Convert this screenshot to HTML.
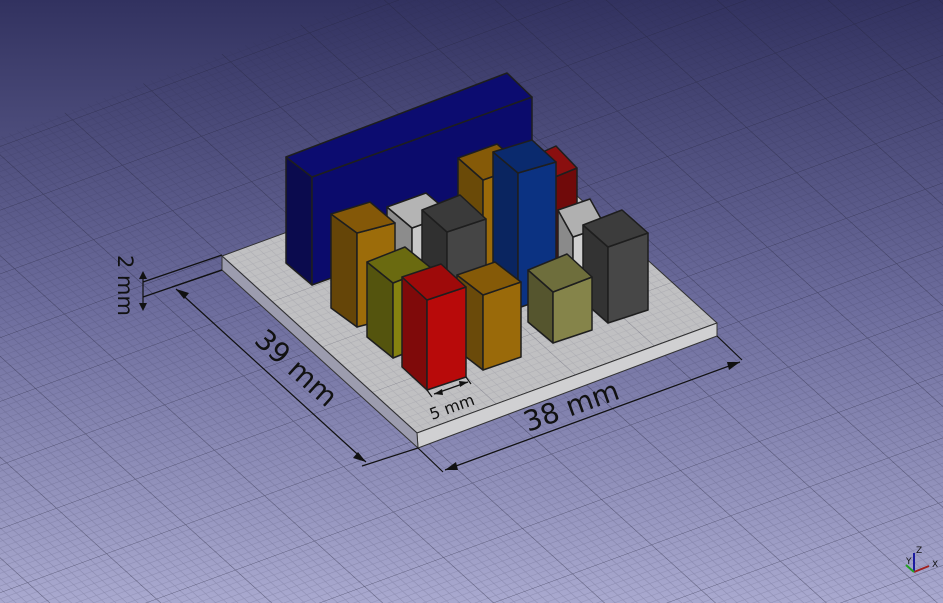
<!DOCTYPE html>
<html><head><meta charset="utf-8"><style>
html,body{margin:0;padding:0;width:943px;height:603px;overflow:hidden}
svg{display:block}
text{font-family:"DejaVu Sans","Liberation Sans",sans-serif;fill:#111}
</style></head><body>
<svg width="943" height="603" viewBox="0 0 943 603" xmlns="http://www.w3.org/2000/svg">
<defs>
<linearGradient id="bg" x1="0" y1="0" x2="0" y2="1">
<stop offset="0" stop-color="#323260"/>
<stop offset="0.5" stop-color="#6c6c9c"/>
<stop offset="1" stop-color="#a9a9cf"/>
</linearGradient>
<pattern id="grid" patternUnits="userSpaceOnUse" width="10" height="10" patternTransform="matrix(7.9 -2.9 5.0 4.54 222 256)">
<g stroke="#2a2a48" stroke-opacity="0.2" stroke-width="0.08" fill="none">
<path d="M1 0V10M2 0V10M3 0V10M4 0V10M5 0V10M6 0V10M7 0V10M8 0V10M9 0V10M0 1H10M0 2H10M0 3H10M0 4H10M0 5H10M0 6H10M0 7H10M0 8H10M0 9H10"/>
</g>
<path d="M0 0V10M0 0H10" stroke="#22223a" stroke-opacity="0.55" stroke-width="0.15" fill="none"/>
</pattern>
<clipPath id="gclip"><polygon points="0,137 367,0 943,0 943,603 0,603"/></clipPath>
</defs>
<rect width="943" height="603" fill="url(#bg)"/>
<rect width="943" height="603" fill="url(#grid)" clip-path="url(#gclip)"/>

<!-- plate -->
<g stroke="#333" stroke-width="1" stroke-linejoin="round">
<polygon points="222,256 522,146 717,323 417,433" fill="#c0c0c2"/>
<polygon points="417,433 717,323 717,336 418,448" fill="#d0d0d2"/>
<polygon points="222,256 417,433 418,448 222,270" fill="#9c9cae"/>
</g>
<polygon points="222,256 522,146 717,323 417,433" fill="url(#grid)" opacity="0.6"/>

<g stroke="#1e1e1e" stroke-width="1.5" stroke-linejoin="round">
<polygon points="286,157 312,177 312,285 286,263" fill="#0b0b4e"/>
<polygon points="312,177 532,97 532,205 312,285" fill="#0b0b6c"/>
<polygon points="286,157 507,73 532,97 312,177" fill="#0c0c70"/>
<polygon points="387,207 412,228 412,288 387,267" fill="#8c8c8c"/>
<polygon points="412,228 451,214 451,274 412,288" fill="#c8c8c8"/>
<polygon points="387,207 426,193 451,214 412,228" fill="#b4b4b4"/>
<polygon points="458,158 483,180 483,290 458,268" fill="#6a4a08"/>
<polygon points="483,180 522,166 522,276 483,290" fill="#9a6a0a"/>
<polygon points="458,158 497,144 522,166 483,180" fill="#855a08"/>
<polygon points="525,160 545,181 545,271 525,250" fill="#5a0808"/>
<polygon points="545,181 577,168 577,258 545,271" fill="#700a0a"/>
<polygon points="525,160 556,146 577,168 545,181" fill="#8a0f0f"/>
<polygon points="558,210 573,237 573,297 558,270" fill="#8a8a8a"/>
<polygon points="573,237 605,226 605,286 573,297" fill="#cfcfcf"/>
<polygon points="558,210 590,199 605,226 573,237" fill="#b0b0b0"/>
<polygon points="493,152 518,173 518,308 493,287" fill="#0a2560"/>
<polygon points="518,173 556,162 556,295 518,308" fill="#0b3282"/>
<polygon points="493,152 532,140 556,162 518,173" fill="#0a2a6e"/>
<polygon points="422,210 447,232 447,322 422,300" fill="#303030"/>
<polygon points="447,232 486,219 486,309 447,322" fill="#454545"/>
<polygon points="422,210 460,195 486,219 447,232" fill="#3a3a3a"/>
<polygon points="331,214 357,233 357,327 331,308" fill="#654508"/>
<polygon points="357,233 395,223 395,317 357,327" fill="#9c6c0a"/>
<polygon points="331,214 370,202 395,223 357,233" fill="#845808"/>
<polygon points="583,225 608,247 608,323 583,301" fill="#333333"/>
<polygon points="608,247 648,233 648,310 608,323" fill="#474747"/>
<polygon points="583,225 622,210 648,233 608,247" fill="#3c3c3c"/>
<polygon points="528,270 553,292 553,343 528,322" fill="#55552e"/>
<polygon points="553,292 592,277 592,330 553,343" fill="#85844a"/>
<polygon points="528,270 567,254 592,277 553,292" fill="#6e6e3c"/>
<polygon points="367,262 393,283 393,358 367,337" fill="#54540e"/>
<polygon points="393,283 431,268 431,343 393,358" fill="#858210"/>
<polygon points="367,262 405,247 431,268 393,283" fill="#6a6a10"/>
<polygon points="457,275 483,295 483,370 457,350" fill="#6a4a0a"/>
<polygon points="483,295 521,282 521,357 483,370" fill="#9a6a0a"/>
<polygon points="457,275 495,262 521,282 483,295" fill="#855a08"/>
<polygon points="402,277 427,300 427,390 402,367" fill="#7f0a0a"/>
<polygon points="427,300 466,287 466,377 427,390" fill="#b80a0a"/>
<polygon points="402,277 441,264 466,287 427,300" fill="#9e0a0a"/>
</g>

<g stroke="#111" stroke-width="1.2" fill="none">
<path d="M222,255 L143,282 M222,270 L143,297 M143,274 V308"/>
<path d="M176,289 L366,462 M222,270 L172,287 M418,448 L362,466"/>
<path d="M445,470 L740,362 M418,448 L443,472 M717,336 L742,360"/>
<path d="M427,390 L432,397 M466,377 L471,384 M434,394 L468,382"/>
</g>
<g fill="#111">
<polygon points="143,271 139,279 147,279"/>
<polygon points="143,311 139,303 147,303"/>
<polygon points="176,289 189,293 184,299"/>
<polygon points="366,462 353,458 358,452"/>
<polygon points="445,470 456,462 458,470"/>
<polygon points="740,362 729,370 727,362"/>
<polygon points="434,394 442,389 443,395"/>
<polygon points="468,382 460,387 459,381"/>
</g>
<text x="0" y="0" font-size="21" transform="translate(118,255) rotate(90)">2 mm</text>
<text x="0" y="0" font-size="28" transform="translate(253,342) rotate(42)">39 mm</text>
<text x="0" y="0" font-size="28" transform="translate(528,432) rotate(-20)">38 mm</text>
<text x="0" y="0" font-size="16" transform="translate(432,420) rotate(-20)">5 mm</text>

<g stroke-width="2">
<line x1="914" y1="572" x2="914" y2="553" stroke="#1a1aa0"/>
<line x1="914" y1="572" x2="929" y2="566" stroke="#a02020"/>
<line x1="914" y1="572" x2="906" y2="565" stroke="#20a020"/>
</g>
<text x="916" y="553" font-size="9">Z</text>
<text x="932" y="567" font-size="9">X</text>
<text x="906" y="564" font-size="9">Y</text>
</svg>
</body></html>
